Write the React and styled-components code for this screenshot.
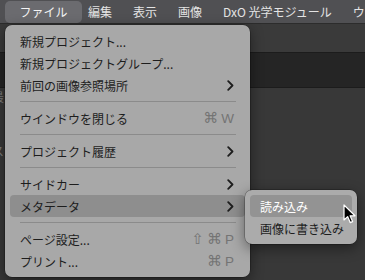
import React from 'react';
import styled, { createGlobalStyle } from 'styled-components';

const GlobalStyle = createGlobalStyle`
  html, body {
    margin: 0;
    padding: 0;
    background: #383838;
    overflow: hidden;
  }
  * { box-sizing: border-box; }
`;

const Screen = styled.div`
  position: relative;
  width: 365px;
  height: 280px;
  overflow: hidden;
  font-family: "Noto Sans CJK JP", "Noto Sans", sans-serif;
  background: #383838;
`;

const MenuBar = styled.div`
  height: 24px;
  display: flex;
  align-items: center;
  padding: 0 5px;
  background: #505053;
  border-bottom: 1px solid #2c2c2c;
`;

const BarItem = styled.div`
  height: 22px;
  display: flex;
  align-items: center;
  justify-content: center;
  padding: 0 ${p => (p.$open ? 15 : 10.5)}px;
  margin-right: ${p => (p.$open ? -4.5 : 0)}px;
  border-radius: 5px;
  font-size: 12px;
  color: ${p => (p.$open ? '#f4f4f4' : '#e4e4e4')};
  white-space: nowrap;
  background: ${p => (p.$open ? '#6b6b6f' : 'transparent')};
  width: ${p => (p.$open ? '77px' : 'auto')};
`;

const Workspace = styled.div`
  display: flex;
  flex-direction: column;
  height: 256px;
`;

const Band = styled.div`
  height: ${p => p.$h}px;
  background: ${p => p.$bg};
  border-top: ${p => (p.$line ? '1px solid #1c1c1c' : 'none')};
  border-bottom: ${p => (p.$line ? '1px solid #1c1c1c' : 'none')};
  flex: ${p => (p.$grow ? 1 : 'none')};
  position: relative;
`;

const PeekText = styled.div`
  padding: ${p => p.$top}px 0 0 0;
  margin-left: -8px;
  color: #7d7d7d;
  font-size: 12px;
  line-height: 14px;
`;

const Menu = styled.div`
  position: absolute;
  left: 5px;
  top: 25px;
  width: 245px;
  padding: 5px;
  background: #a8a8a8;
  border-radius: 7px;
  box-shadow: 0 4px 14px rgba(0, 0, 0, 0.45), 0 0 0 0.5px rgba(0, 0, 0, 0.4);
  z-index: 5;
`;

const SubMenu = styled(Menu)`
  left: 100%;
  top: -5px;
  width: 112px;
  background: #ababab;
  z-index: 6;
`;

const Item = styled.div`
  position: relative;
  height: 22px;
  display: flex;
  align-items: center;
  justify-content: space-between;
  padding: 0 11px 0 10px;
  border-radius: 4px;
  font-size: 12px;
  color: ${p => (p.$light ? '#ffffff' : '#1d1d1d')};
  background: ${p => (p.$active ? p.$activeBg || '#8e8e8e' : 'transparent')};
  white-space: nowrap;
`;

const Separator = styled.div`
  height: 1px;
  margin: 5px 9px 5px 10px;
  background: #8b8b8b;
`;

const Shortcut = styled.span`
  font-family: "Liberation Sans", sans-serif;
  font-size: 13.5px;
  color: #747474;
  display: flex;
  align-items: center;
  gap: 3px;
`;

const Sym = styled.span`
  font-family: "DejaVu Sans", sans-serif;
  font-size: 15px;
  line-height: 1;
`;

const Cursor = styled.svg`
  position: absolute;
  left: 343px;
  top: 204px;
  z-index: 10;
`;

const Chevron = () => (
  <svg width="7" height="11" viewBox="0 0 7 11">
    <polyline points="1.2,1.2 5.5,5.5 1.2,9.8" fill="none" stroke="#1d1d1d" strokeWidth="1.8" strokeLinecap="round" strokeLinejoin="round" />
  </svg>
);

const bar = ['ファイル', '編集', '表示', '画像', 'DxO 光学モジュール', 'ウ'];

export default function App() {
  return (
    <Screen>
      <GlobalStyle />
      <MenuBar>
        {bar.map((b, i) => (
          <BarItem key={b} $open={i === 0}>{b}</BarItem>
        ))}
      </MenuBar>
      <Workspace>
        <Band $h={28} $bg="#3a3a3a" />
        <Band $h={36} $bg="#252525" $line />
        <Band $grow $bg="#383838">
          <PeekText $top={2}>最</PeekText>
          <PeekText $top={40}>ス</PeekText>
        </Band>
      </Workspace>

      <Menu>
        <Item>新規プロジェクト...</Item>
        <Item>新規プロジェクトグループ...</Item>
        <Item>前回の画像参照場所<Chevron /></Item>
        <Separator />
        <Item>ウインドウを閉じる<Shortcut><Sym>⌘</Sym>W</Shortcut></Item>
        <Separator />
        <Item>プロジェクト履歴<Chevron /></Item>
        <Separator />
        <Item>サイドカー<Chevron /></Item>
        <Item $active>
          メタデータ<Chevron />
          <SubMenu>
            <Item $active $light $activeBg="#939393">読み込み</Item>
            <Item>画像に書き込み</Item>
          </SubMenu>
        </Item>
        <Separator />
        <Item>ページ設定...<Shortcut><Sym>⇧</Sym><Sym>⌘</Sym>P</Shortcut></Item>
        <Item>プリント...<Shortcut><Sym>⌘</Sym>P</Shortcut></Item>
      </Menu>

      <Cursor width="14" height="21" viewBox="0 0 14 21">
        <path d="M1 1 L1 16 L4.6 12.6 L7.2 18.6 L9.6 17.6 L7.1 11.8 L12 11.8 Z" fill="#000" stroke="#fff" strokeWidth="1.2" strokeLinejoin="round" />
      </Cursor>
    </Screen>
  );
}
